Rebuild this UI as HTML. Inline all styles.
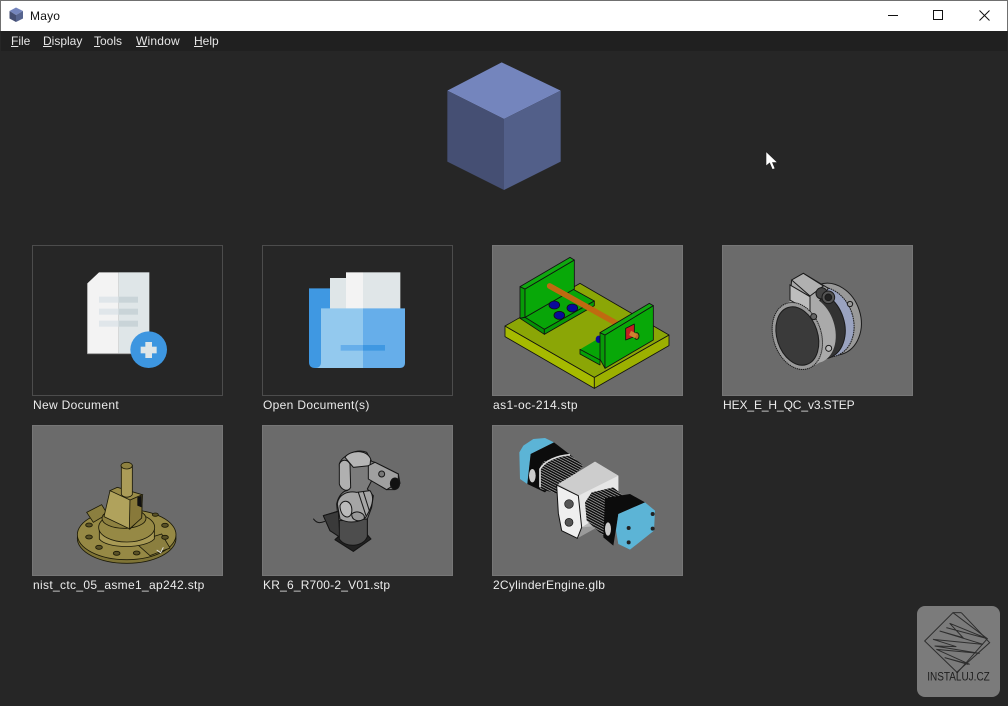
<!DOCTYPE html>
<html><head><meta charset="utf-8"><style>
html,body{margin:0;padding:0;width:1008px;height:706px;overflow:hidden;background:#262626;font-family:"Liberation Sans",sans-serif}
.a{position:absolute}
#title{left:0;top:0;width:1008px;height:31px;background:#fff;box-sizing:border-box;border:1px solid #707070;border-bottom:0}
#menu{left:1px;top:31px;width:1006px;height:20px;background:#202020}
.m{position:absolute;top:34px;font-size:12px;line-height:15px;color:#e6e6e6;white-space:nowrap}
.m u{text-decoration:underline}
.tile{position:absolute;width:189px;height:149px;border:1px solid #565656}
.tile.e{border-color:#4c4c4c;background:#262626}
.tile.i{background:#6b6b6b;border-color:#767676}
.l{position:absolute;top:398px;font-size:12px;line-height:15px;color:#ececec;white-space:nowrap;letter-spacing:.33px}
svg{position:absolute;display:block;overflow:visible}
</style></head><body>
<div class="a" id="title"></div>
<svg style="left:8px;top:6px" width="16" height="17" viewBox="0 0 16 17"><polygon points="8,1.500 15,5 8,9 1.500,5" fill="#7485bd"/><polygon points="1.500,5 8,9 8,16 1.500,12.500" fill="#454f73"/><polygon points="8,9 15,5 15,12.500 8,16" fill="#56648f"/></svg>
<div class="a" style="left:30px;top:8px;font-size:12px;line-height:16px;color:#111;letter-spacing:.2px">Mayo</div>
<svg style="left:880px;top:0" width="128" height="31" viewBox="0 0 128 31" fill="none" stroke="#111" stroke-width="1"><path d="M8 15.500H18"/><rect x="53.500" y="10.500" width="9" height="9"/><path d="M99.500 10.500L109.500 20.500M109.500 10.500L99.500 20.500"/></svg>
<div class="a" id="menu"></div>
<div class="m" style="left:11px"><u>F</u>ile</div>
<div class="m" style="left:43px"><u>D</u>isplay</div>
<div class="m" style="left:94px"><u>T</u>ools</div>
<div class="m" style="left:136px;letter-spacing:.2px"><u>W</u>indow</div>
<div class="m" style="left:194px"><u>H</u>elp</div>

<svg style="left:430px;top:50px" width="150" height="150" viewBox="0 0 450 450">
<polygon points="215,37 392,122 222,207 52,122" fill="#7485bd"/>
<polygon points="52,122 222,207 222,420 52,335" fill="#454f73"/>
<polygon points="222,207 392,122 392,335 222,420" fill="#525f89"/>
</svg>
<svg style="left:765px;top:151px" width="14" height="20" viewBox="0 0 14 20"><path d="M1 .5V15L4.600 12 7.400 18.500 10 17.500 7.500 11.500 12.500 11.500Z" fill="#fff" stroke="#222" stroke-width=".6"/></svg>

<div class="tile e" style="left:32px;top:245px"></div>
<div class="tile e" style="left:262px;top:245px"></div>
<div class="tile i" style="left:492px;top:245px"></div>
<div class="tile i" style="left:722px;top:245px"></div>
<div class="tile i" style="left:32px;top:425px"></div>
<div class="tile i" style="left:262px;top:425px"></div>
<div class="tile i" style="left:492px;top:425px"></div>

<svg style="left:20px;top:240px" width="440" height="175" viewBox="0 0 1320 525">
<polygon points="202,130 237,97 296,97 296,342 202,342" fill="#f3f3f3"/>
<rect x="296" y="97" width="92" height="245" fill="#dfe6e8"/>
<path d="M202 341H340" stroke="#a5a5a5" stroke-width="3"/>
<rect x="237" y="170" width="59" height="18" fill="#e0e6ea"/><rect x="296" y="170" width="58" height="18" fill="#c9d4d8"/>
<rect x="237" y="206" width="59" height="18" fill="#e0e6ea"/><rect x="296" y="206" width="58" height="18" fill="#c9d4d8"/>
<rect x="237" y="242" width="59" height="18" fill="#e0e6ea"/><rect x="296" y="242" width="58" height="18" fill="#c9d4d8"/>
<circle cx="386" cy="329" r="55" fill="#3d96e0"/>
<rect x="362" y="320" width="48" height="20" fill="#dfe6e8"/><rect x="376" y="306" width="20" height="48" fill="#dfe6e8"/>
<path d="M867 145H932V384H885Q867 384 867 366Z" fill="#3f98e2"/>
<rect x="930" y="114" width="50" height="95" fill="#dfe6e8"/>
<rect x="978" y="97" width="51" height="112" fill="#f3f3f3"/>
<rect x="1029" y="97" width="112" height="112" fill="#e0e6e8"/>
<path d="M903 205H1029V384H885Q903 384 903 366Z" fill="#93c9ee"/>
<path d="M1029 205H1155V368Q1155 384 1139 384H1029Z" fill="#66aeea"/>
<rect x="962" y="315" width="67" height="17" fill="#66aeea"/><rect x="1029" y="315" width="66" height="17" fill="#3f98e2"/>
</svg>

<svg style="left:490px;top:240px" width="200" height="160" viewBox="0 0 600 480" stroke="#111" stroke-width="2.500" stroke-linejoin="round">
<polygon points="45,258 313,412 313,445 45,290" fill="#a6ba00"/>
<polygon points="313,412 537,285 537,317 313,445" fill="#9cb000"/>
<polygon points="45,258 270,130 537,285 313,412" fill="#8ba606"/>
<polygon points="270,328 330,293 330,360 270,328" fill="#06a506" stroke="none"/>
<polygon points="270,328 330,360 330,375 270,342" fill="#06a006"/>
<ellipse cx="326" cy="298" rx="9" ry="11" fill="#0a0a9a" stroke="none"/>
<polygon points="90,140 105,147 105,232 90,235" fill="#089a08"/>
<polygon points="105,232 250,148 313,183 163,268" fill="#08a508"/>
<polygon points="90,235 105,232 163,268 163,283" fill="#069006"/>
<polygon points="163,268 313,183 313,197 163,283" fill="#069a06"/>
<polygon points="105,147 253,60 253,147 105,232" fill="#08a808"/>
<polygon points="90,140 240,52 253,60 105,147" fill="#10a810"/>
<ellipse cx="193" cy="195" rx="16" ry="12" fill="#0a0a9a" stroke="#111"/>
<ellipse cx="247" cy="204" rx="16" ry="12" fill="#0a0a9a" stroke="#111"/>
<ellipse cx="208" cy="226" rx="16" ry="12" fill="#0a0a9a" stroke="#111"/>
<path d="M179 138L376 248" stroke="#c06a10" stroke-width="17" stroke-linecap="round"/>
<polygon points="330,278 345,285 345,385 330,358" fill="#089a08"/>
<polygon points="345,285 490,197 490,300 345,385" fill="#08a808"/>
<polygon points="330,278 478,190 490,197 345,285" fill="#10a810"/>
<polygon points="407,265 433,252 433,290 407,300" fill="#c42020"/>
<ellipse cx="440" cy="288" rx="7" ry="10" fill="#b87020"/>
<path d="M420 279L438 288" stroke="#d08030" stroke-width="14"/>
</svg>

<svg style="left:760px;top:260px" width="120" height="120" viewBox="0 0 360 360" stroke="#1a1a1a" stroke-width="3">
<ellipse cx="212" cy="178" rx="90" ry="110" transform="rotate(-18 212 178)" fill="#999"/>
<ellipse cx="195" cy="186" rx="85" ry="107" transform="rotate(-18 195 186)" fill="#9aa3c0" stroke-dasharray="5 2"/>
<ellipse cx="175" cy="196" rx="78" ry="103" transform="rotate(-18 175 196)" fill="#333"/>
<polygon points="95,60 130,40 205,85 160,150 90,115" fill="#a8a8a8"/>
<polygon points="90,75 150,110 150,155 90,120" fill="#bdbdbd"/>
<polygon points="95,60 130,40 190,78 150,108" fill="#b0b0b0"/>
<circle cx="185" cy="100" r="17" fill="#444"/><circle cx="205" cy="112" r="19" fill="#555"/><circle cx="205" cy="112" r="10" fill="#222"/>
<ellipse cx="150" cy="208" rx="74" ry="104" transform="rotate(-18 150 208)" fill="#aaa" stroke="none"/>
<ellipse cx="130" cy="218" rx="73" ry="103" transform="rotate(-18 130 218)" fill="#aaa" stroke="none"/>
<polygon points="90,75 150,110 150,155 90,120" fill="#bdbdbd"/>
<ellipse cx="112" cy="228" rx="72" ry="103" transform="rotate(-18 112 228)" fill="#9a9a9a" stroke-dasharray="4 2"/>
<ellipse cx="112" cy="228" rx="61" ry="90" transform="rotate(-18 112 228)" fill="#3a3a3a"/>
<circle cx="161" cy="170" r="9" fill="#666"/><circle cx="206" cy="265" r="9" fill="#bbb"/><circle cx="270" cy="132" r="8" fill="#999"/>
</svg>

<svg style="left:30px;top:424px" width="200" height="160" viewBox="0 0 600 480" stroke="#1c1a08" stroke-width="2.500">
<ellipse cx="290" cy="343" rx="148" ry="75" fill="#7f7436"/>
<ellipse cx="290" cy="332" rx="148" ry="75" fill="#968945"/>
<polygon points="315,355 395,330 420,372 360,395" fill="#8b7f3f"/>
<polygon points="170,265 215,242 232,270 190,295" fill="#8b7f3f"/>
<path d="M208 310V345C230 375 345 375 373 345V310Z" fill="#a89a55"/>
<ellipse cx="290" cy="310" rx="84" ry="44" fill="#968945"/>
<ellipse cx="282" cy="283" rx="66" ry="30" fill="#8e8140"/>
<polygon points="240,200 337,215 335,280 300,315 222,278" fill="#b0a25c"/>
<polygon points="300,225 337,212 335,282 298,315" fill="#88793a"/>
<polygon points="240,200 262,190 337,212 300,228" fill="#9a8c48"/>
<polygon points="322,220 335,215 335,250 322,245" fill="#111" stroke="none"/>
<path d="M274 125V212C282 222 300 222 307 212V125Z" fill="#ab9c58"/>
<ellipse cx="290" cy="125" rx="17" ry="10" fill="#8e8140"/>
<g fill="#5a5226"><ellipse cx="177" cy="303" rx="10" ry="6"/><ellipse cx="177" cy="339" rx="10" ry="6"/><ellipse cx="207" cy="370" rx="10" ry="6"/><ellipse cx="260" cy="388" rx="10" ry="6"/><ellipse cx="320" cy="387" rx="10" ry="6"/><ellipse cx="405" cy="340" rx="10" ry="6"/><ellipse cx="405" cy="304" rx="10" ry="6"/><ellipse cx="376" cy="272" rx="9" ry="5"/></g>
<path d="M380 378L392 386L400 370" fill="none" stroke="#ddd" stroke-width="3"/>
</svg>

<svg style="left:260px;top:424px" width="200" height="160" viewBox="0 0 600 480" stroke="#151515" stroke-width="3" stroke-linejoin="round">
<path d="M160 284C170 298 180 298 195 292" fill="none"/>
<path d="M238 120C245 95 290 72 320 85L335 112L345 115L415 150L420 178L405 197L380 197L335 170L322 195L340 215L335 250L322 285V338L332 345L280 382L225 347L238 335L210 320L190 275L232 262L230 240C235 215 250 200 262 200L240 180Z" fill="#7c7c7c"/>
<polygon points="190,275 235,262 240,340 210,320" fill="#3a3a3a"/>
<polygon points="225,347 280,382 333,345 320,330 240,335" fill="#222"/>
<path d="M238 290V345C255 372 310 370 322 338V285Z" fill="#4d4d4d"/>
<path d="M232 240C235 210 265 200 290 205L330 200C345 220 335 250 320 275C310 295 265 300 240 285Z" fill="#a5a5a5"/>
<path d="M240 245C250 220 280 232 275 265C270 290 240 280 240 245Z" fill="#bbb"/>
<path d="M295 205L318 275M310 203L328 260" fill="none"/>
<path d="M275 270C290 255 320 270 312 285C295 295 275 290 275 270Z" fill="#999"/>
<path d="M238 120C245 105 262 105 270 120L272 190C262 208 242 195 238 180Z" fill="#b0b0b0"/>
<path d="M255 100C270 78 320 75 332 105L330 125L280 130Z" fill="#b5b5b5"/>
<polygon points="325,125 345,115 415,150 415,175 380,197 325,165" fill="#a0a0a0"/>
<ellipse cx="405" cy="179" rx="14" ry="17" fill="#111"/>
<circle cx="365" cy="150" r="9" fill="#777"/>
</svg>

<svg style="left:490px;top:424px" width="200" height="160" viewBox="0 0 600 480" stroke-linejoin="round">
<defs><pattern id="s" width="7" height="7" patternUnits="userSpaceOnUse" patternTransform="rotate(28)"><rect width="7" height="7" fill="#0c0c0c"/><rect width="7" height="2" fill="#bbb"/></pattern></defs>
<polygon points="88,85 100,65 130,45 165,42 192,55 122,90 112,180 90,165" fill="#5cb4d6"/>
<polygon points="122,90 192,55 240,92 235,130 165,205 112,180" fill="#0c0c0c"/>
<ellipse cx="127" cy="155" rx="10" ry="20" fill="#ccc"/>
<polygon points="150,130 160,112 240,92 280,125 200,208 150,195" fill="url(#s)"/>
<path d="M150 190L150 135C165 110 200 95 240 92" fill="none" stroke="#ddd" stroke-width="5"/>
<polygon points="205,180 315,113 385,155 385,240 330,305 265,340 205,270" fill="#b8b8b8"/>
<polygon points="205,180 315,113 385,155 265,215" fill="#cdcdcd"/>
<polygon points="265,215 385,155 385,240 275,310" fill="#e6e6e6"/>
<polygon points="275,310 330,305 262,343" fill="#9a9a9a"/>
<polygon points="200,183 265,215 275,310 262,343 215,320 205,268" fill="#efefef" stroke="#111" stroke-width="3"/>
<circle cx="237" cy="240" r="13" fill="#555" stroke="#111" stroke-width="2"/><circle cx="237" cy="295" r="12" fill="#555" stroke="#111" stroke-width="2"/>
<polygon points="285,235 305,205 370,190 400,215 345,340 290,290" fill="url(#s)"/>
<polygon points="345,222 420,210 465,235 385,270 370,365 340,340" fill="#0c0c0c"/>
<ellipse cx="354" cy="315" rx="9" ry="20" fill="#ccc"/>
<polygon points="385,270 465,235 495,260 492,320 420,377 385,360 378,320" fill="#5cb4d6"/>
<g fill="#222"><circle cx="416" cy="312" r="6"/><circle cx="416" cy="355" r="6"/><circle cx="488" cy="270" r="6"/><circle cx="488" cy="314" r="6"/></g>
</svg>

<div class="l" style="left:33px">New Document</div>
<div class="l" style="left:263px">Open Document(s)</div>
<div class="l" style="left:493px;letter-spacing:.4px">as1-oc-214.stp</div>
<div class="l" style="left:723px;letter-spacing:-.1px">HEX_E_H_QC_v3.STEP</div>
<div class="l" style="left:33px;top:578px">nist_ctc_05_asme1_ap242.stp</div>
<div class="l" style="left:263px;top:578px;letter-spacing:.2px">KR_6_R700-2_V01.stp</div>
<div class="l" style="left:493px;top:578px;letter-spacing:.25px">2CylinderEngine.glb</div>

<div class="a" style="left:917px;top:606px;width:83px;height:91px;background:#7b7b7b;border-radius:8px"></div>
<svg style="left:908px;top:596px" width="100" height="110" viewBox="0 0 300 330" fill="none" stroke="#2e2e2e" stroke-width="3">
<path d="M50 135L135 50L238 128L148 230Z"/>
<path d="M160 50L245 140L145 230"/>
<path d="M135 50L160 50"/>
<path d="M115 95L238 128L125 82L165 125L95 105L225 145L75 130L145 152L80 150L215 172L85 160L185 205L110 185L180 205"/>
</svg>
<div class="a" style="left:917px;top:671px;width:83px;text-align:center;font-size:10px;line-height:14px;color:#1e1e1e;white-space:nowrap;transform:scaleY(1.15)">INSTALUJ.CZ</div>
</body></html>
